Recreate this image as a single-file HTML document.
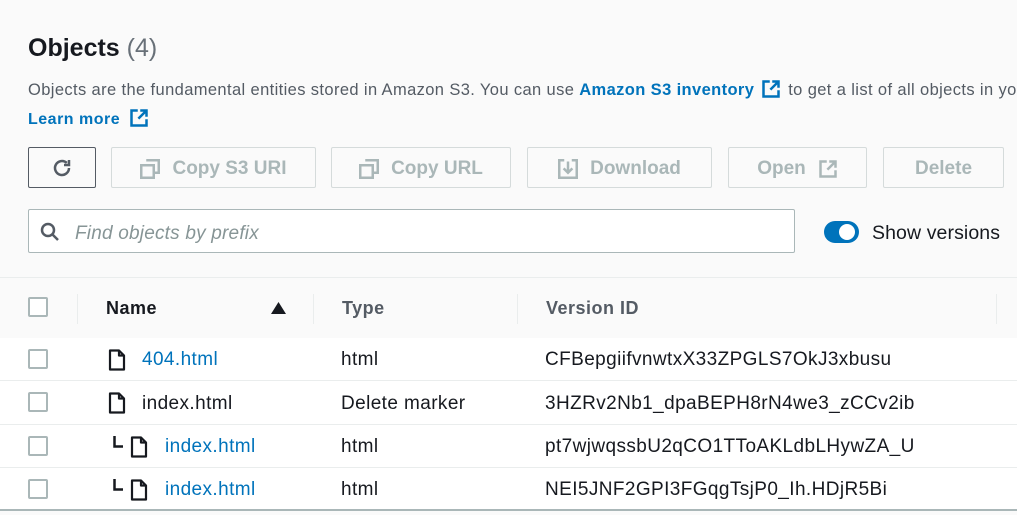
<!DOCTYPE html>
<html><head><meta charset="utf-8"><style>
*{box-sizing:border-box;margin:0;padding:0}
body{width:1017px;height:515px;overflow:hidden;background:#fafafa;font-family:"Liberation Sans",Arial,sans-serif;color:#16191f;position:relative}
.a{position:absolute;white-space:nowrap}
.btn{position:absolute;top:147px;height:41px;border:1px solid #d5dbdb;border-radius:2px;background:#fafafa;color:#aab7b8;font-weight:bold;font-size:19px;display:flex;align-items:center;justify-content:center;gap:12px;padding-top:3px}
.link{color:#0073bb}
.hdr{position:absolute;top:277px;left:0;width:1017px;height:61px;border-top:1px solid #eaeded;background:#fafafa}
.row{position:absolute;left:0;width:1017px;height:43px;background:#fff;border-bottom:1px solid #eaeded;font-size:19px;letter-spacing:0.4px}
.cb{position:absolute;left:28px;width:20px;height:20px;border:2px solid #aab7b8;border-radius:2px;background:#fff}
.div{position:absolute;top:16px;width:1px;height:30px;background:#eaeded}
.th{position:absolute;top:20px;font-size:18px;font-weight:bold;color:#545b64;letter-spacing:0.5px}
</style></head><body>
<div class="a" style="left:28px;top:34px;font-size:25px;font-weight:bold">Objects <span style="font-weight:normal;color:#687078">(4)</span></div>
<div class="a" style="left:28px;top:79px;width:989px;height:24px;overflow:hidden;font-size:16.5px;letter-spacing:0.38px;color:#545b64">Objects are the fundamental entities stored in Amazon S3. You can use <b class="link">Amazon S3 inventory</b> <svg width="20" height="20" viewBox="0 0 16 16" style="vertical-align:-4px;margin:0 2px"><path d="M7 2H2v12h12V9M9 2h5v5M14 2 7.5 8.5" fill="none" stroke="#0073bb" stroke-width="2"/></svg> to get a list of all objects in your bucket</div>
<div class="a link" style="left:28px;top:108px;font-size:16px;letter-spacing:0.5px;font-weight:bold">Learn more <svg width="20" height="20" viewBox="0 0 16 16" style="vertical-align:-4px;margin-left:4px"><path d="M7 2H2v12h12V9M9 2h5v5M14 2 7.5 8.5" fill="none" stroke="#0073bb" stroke-width="2"/></svg></div>

<div class="btn" style="left:28px;width:68px;border-color:#545b64;border-width:1.5px;padding-top:0"><svg width="24" height="24" viewBox="0 0 24 24"><path d="M19 12a7 7 0 1 1-2.2-5.1" fill="none" stroke="#545b64" stroke-width="2.5"/><path d="M19 4v5h-5" fill="none" stroke="#545b64" stroke-width="2.5"/></svg></div>
<div class="btn" style="left:111px;width:205px"><svg width="20" height="20" viewBox="0 0 16 16"><path d="M5 1h10v10H12M1 5h10v10H1z" fill="none" stroke="#aab7b8" stroke-width="2"/></svg>Copy S3 URI</div>
<div class="btn" style="left:331px;width:180px"><svg width="20" height="20" viewBox="0 0 16 16"><path d="M5 1h10v10H12M1 5h10v10H1z" fill="none" stroke="#aab7b8" stroke-width="2"/></svg>Copy URL</div>
<div class="btn" style="left:527px;width:185px"><svg width="20" height="20" viewBox="0 0 16 16"><path d="M5 1H1v14h14V1h-4M8 2v9M4.5 7.5 8 11l3.5-3.5" fill="none" stroke="#aab7b8" stroke-width="2"/></svg>Download</div>
<div class="btn" style="left:728px;width:139px">Open <svg width="20" height="20" viewBox="0 0 16 16"><path d="M7 2H2v12h12V9M9 2h5v5M14 2 7.5 8.5" fill="none" stroke="#aab7b8" stroke-width="2"/></svg></div>
<div class="btn" style="left:883px;width:121px">Delete</div>

<div class="a" style="left:28px;top:209px;width:767px;height:44px;border:1.5px solid #aab7b8;border-radius:2px;background:#fff"></div>
<svg class="a" style="left:40px;top:222px" width="20" height="20" viewBox="0 0 20 20"><circle cx="8" cy="8" r="6" fill="none" stroke="#545b64" stroke-width="2.5"/><path d="M12.5 12.5 18 18" stroke="#545b64" stroke-width="2.5"/></svg>
<div class="a" style="left:75px;top:223px;font-size:19px;letter-spacing:0.2px;font-style:italic;color:#879596">Find objects by prefix</div>
<div class="a" style="left:824px;top:221px;width:35px;height:22px;border-radius:11px;background:#0073bb"></div>
<div class="a" style="left:839px;top:224px;width:16px;height:16px;border-radius:50%;background:#fff"></div>
<div class="a" style="left:872px;top:222px;font-size:19.5px;letter-spacing:0.1px;color:#16191f">Show versions</div>

<div class="hdr">
<div class="cb" style="top:19px"></div>
<div class="div" style="left:77px"></div><div class="div" style="left:313px"></div><div class="div" style="left:517px"></div><div class="div" style="left:996px"></div>
<div class="th" style="left:106px;color:#16191f">Name</div>
<svg class="a" style="left:271px;top:24px" width="15" height="12"><path d="M0 12 7.5 0 15 12z" fill="#16191f"/></svg>
<div class="th" style="left:342px">Type</div>
<div class="th" style="left:546px">Version ID</div>
</div>

<div class="row" style="top:338px"><div class="cb" style="top:11px"></div>
<svg class="a" style="left:108px;top:11px" width="18" height="22" viewBox="0 0 18 22"><path d="M2 1.5h9l5 5v14H2z M11 1.5v5h5" fill="none" stroke="#16191f" stroke-width="2.2" stroke-linejoin="round"/></svg>
<div class="a link" style="left:142px;top:11px">404.html</div><div class="a" style="left:341px;top:11px">html</div><div class="a" style="left:545px;top:11px">CFBepgiifvnwtxX33ZPGLS7OkJ3xbusu</div></div>
<div class="row" style="top:381px;height:44px"><div class="cb" style="top:11px"></div>
<svg class="a" style="left:108px;top:11px" width="18" height="22" viewBox="0 0 18 22"><path d="M2 1.5h9l5 5v14H2z M11 1.5v5h5" fill="none" stroke="#16191f" stroke-width="2.2" stroke-linejoin="round"/></svg>
<div class="a" style="left:142px;top:12px">index.html</div><div class="a" style="left:341px;top:12px">Delete marker</div><div class="a" style="left:545px;top:12px">3HZRv2Nb1_dpaBEPH8rN4we3_zCCv2ib</div></div>
<div class="row" style="top:425px"><div class="cb" style="top:11px"></div>
<svg class="a" style="left:113px;top:11px" width="10" height="12"><path d="M1.5 0v10.5H10" fill="none" stroke="#16191f" stroke-width="2.5"/></svg>
<svg class="a" style="left:130px;top:11px" width="18" height="22" viewBox="0 0 18 22"><path d="M2 1.5h9l5 5v14H2z M11 1.5v5h5" fill="none" stroke="#16191f" stroke-width="2.2" stroke-linejoin="round"/></svg>
<div class="a link" style="left:165px;top:11px">index.html</div><div class="a" style="left:341px;top:11px">html</div><div class="a" style="left:545px;top:11px">pt7wjwqssbU2qCO1TToAKLdbLHywZA_U</div></div>
<div class="row" style="top:468px;border-bottom:2px solid #aab7b8"><div class="cb" style="top:11px"></div>
<svg class="a" style="left:113px;top:11px" width="10" height="12"><path d="M1.5 0v10.5H10" fill="none" stroke="#16191f" stroke-width="2.5"/></svg>
<svg class="a" style="left:130px;top:11px" width="18" height="22" viewBox="0 0 18 22"><path d="M2 1.5h9l5 5v14H2z M11 1.5v5h5" fill="none" stroke="#16191f" stroke-width="2.2" stroke-linejoin="round"/></svg>
<div class="a link" style="left:165px;top:11px">index.html</div><div class="a" style="left:341px;top:11px">html</div><div class="a" style="left:545px;top:11px">NEI5JNF2GPI3FGqgTsjP0_Ih.HDjR5Bi</div></div>
</body></html>
